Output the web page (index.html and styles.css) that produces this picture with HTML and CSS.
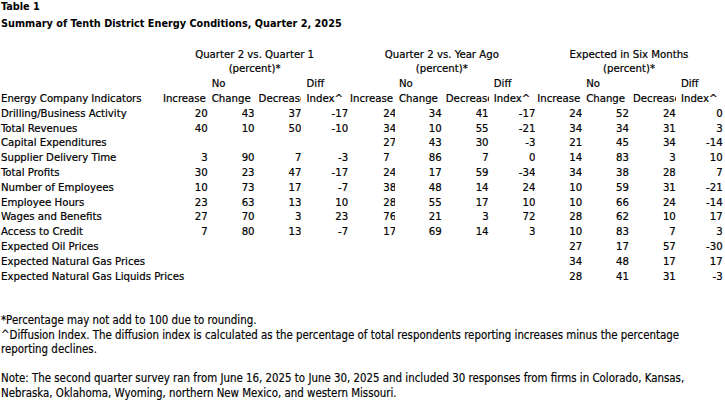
FILE: index.html
```html
<!DOCTYPE html>
<html>
<head>
<meta charset="utf-8">
<link rel="stylesheet" href="styles.css">
</head>
<body>
<div class="page">
  <div class="t1">Table 1</div>
  <div class="t2">Summary of Tenth District Energy Conditions, Quarter 2, 2025</div>
  <table class="grid">
    <colgroup>
      <col class="c-label">
      <col class="c-num"><col class="c-num"><col class="c-num"><col class="c-num">
      <col class="c-num"><col class="c-num"><col class="c-num"><col class="c-num">
      <col class="c-num"><col class="c-num"><col class="c-num"><col class="c-num">
    </colgroup>
    <thead>
      <tr>
        <th></th>
        <th colspan="4" class="grp">Quarter 2 vs. Quarter 1</th>
        <th colspan="4" class="grp">Quarter 2 vs. Year Ago</th>
        <th colspan="4" class="grp">Expected in Six Months</th>
      </tr>
      <tr>
        <th></th>
        <th colspan="4" class="grp">(percent)*</th>
        <th colspan="4" class="grp">(percent)*</th>
        <th colspan="4" class="grp">(percent)*</th>
      </tr>
      <tr>
        <th></th>
        <th rowspan="2" class="hd">Increase</th>
        <th rowspan="2" class="hd"><span class="stack">No<br>Change</span></th>
        <th rowspan="2" class="hd dec">Decrease</th>
        <th rowspan="2" class="hd"><span class="stack">Diff<br>Index^</span></th>
        <th rowspan="2" class="hd">Increase</th>
        <th rowspan="2" class="hd"><span class="stack">No<br>Change</span></th>
        <th rowspan="2" class="hd dec">Decrease</th>
        <th rowspan="2" class="hd"><span class="stack">Diff<br>Index^</span></th>
        <th rowspan="2" class="hd">Increase</th>
        <th rowspan="2" class="hd"><span class="stack">No<br>Change</span></th>
        <th rowspan="2" class="hd dec">Decrease</th>
        <th rowspan="2" class="hd"><span class="stack">Diff<br>Index^</span></th>
      </tr>
      <tr>
        <th class="lab">Energy Company Indicators</th>
      </tr>
    </thead>
    <tbody>
      <tr><td class="lab">Drilling/Business Activity</td><td>20</td><td>43</td><td>37</td><td>-17</td><td>24</td><td>34</td><td>41</td><td>-17</td><td>24</td><td>52</td><td>24</td><td>0</td></tr>
      <tr><td class="lab">Total Revenues</td><td>40</td><td>10</td><td>50</td><td>-10</td><td>34</td><td>10</td><td>55</td><td>-21</td><td>34</td><td>34</td><td>31</td><td>3</td></tr>
      <tr><td class="lab">Capital Expenditures</td><td></td><td></td><td></td><td></td><td>27</td><td>43</td><td>30</td><td>-3</td><td>21</td><td>45</td><td>34</td><td>-14</td></tr>
      <tr><td class="lab">Supplier Delivery Time</td><td>3</td><td>90</td><td>7</td><td>-3</td><td>7</td><td>86</td><td>7</td><td>0</td><td>14</td><td>83</td><td>3</td><td>10</td></tr>
      <tr><td class="lab">Total Profits</td><td>30</td><td>23</td><td>47</td><td>-17</td><td>24</td><td>17</td><td>59</td><td>-34</td><td>34</td><td>38</td><td>28</td><td>7</td></tr>
      <tr><td class="lab">Number of Employees</td><td>10</td><td>73</td><td>17</td><td>-7</td><td>38</td><td>48</td><td>14</td><td>24</td><td>10</td><td>59</td><td>31</td><td>-21</td></tr>
      <tr><td class="lab">Employee Hours</td><td>23</td><td>63</td><td>13</td><td>10</td><td>28</td><td>55</td><td>17</td><td>10</td><td>10</td><td>66</td><td>24</td><td>-14</td></tr>
      <tr><td class="lab">Wages and Benefits</td><td>27</td><td>70</td><td>3</td><td>23</td><td>76</td><td>21</td><td>3</td><td>72</td><td>28</td><td>62</td><td>10</td><td>17</td></tr>
      <tr><td class="lab">Access to Credit</td><td>7</td><td>80</td><td>13</td><td>-7</td><td>17</td><td>69</td><td>14</td><td>3</td><td>10</td><td>83</td><td>7</td><td>3</td></tr>
      <tr><td class="lab">Expected Oil Prices</td><td></td><td></td><td></td><td></td><td></td><td></td><td></td><td></td><td>27</td><td>17</td><td>57</td><td>-30</td></tr>
      <tr><td class="lab">Expected Natural Gas Prices</td><td></td><td></td><td></td><td></td><td></td><td></td><td></td><td></td><td>34</td><td>48</td><td>17</td><td>17</td></tr>
      <tr><td class="lab">Expected Natural Gas Liquids Prices</td><td></td><td></td><td></td><td></td><td></td><td></td><td></td><td></td><td>28</td><td>41</td><td>31</td><td>-3</td></tr>
    </tbody>
  </table>
  <div class="notes">
    <p class="note">*Percentage may not add to 100 due to rounding.<br>^Diffusion Index. The diffusion index is calculated as the percentage of total respondents reporting increases minus the percentage<br>reporting declines.</p>
    <p class="note gap">Note: The second quarter survey ran from June 16, 2025 to June 30, 2025 and included 30 responses from firms in Colorado, Kansas,<br>Nebraska, Oklahoma, Wyoming, northern New Mexico, and western Missouri.</p>
  </div>
</div>
</body>
</html>
```

FILE: styles.css
```css
html, body {
  margin: 0;
  padding: 0;
  background: #fff;
}

body {
  font-family: "DejaVu Sans Condensed", "DejaVu Sans", sans-serif;
  font-size: 11.3px;
  color: #000;
}

.page {
  padding-left: 1px;
}

.t1 {
  font-weight: bold;
  font-size: 10.8px;
  line-height: 14px;
}

.t2 {
  font-weight: bold;
  font-size: 10.8px;
  line-height: 14.8px;
  margin-top: 2.5px;
}

.grid {
  border-collapse: collapse;
  table-layout: fixed;
  width: 721.6px;
  margin-top: 16.3px;
  -webkit-text-stroke: 0.2px #000;
}

.c-label {
  width: 160px;
}

.c-num {
  width: 46.8px;
}

.grid th,
.grid td {
  padding: 0;
  height: 14.8px;
  line-height: 14.8px;
  white-space: nowrap;
  overflow: hidden;
  font-weight: normal;
  text-align: right;
  vertical-align: middle;
}

.grid .grp {
  text-align: center;
}

.grid .hd {
  text-align: center;
  vertical-align: bottom;
}

.grid .dec {
  text-align: left;
  padding-left: 4px;
  text-overflow: clip;
}

.stack {
  display: inline-block;
  text-align: left;
}

.grid .lab {
  text-align: left;
  overflow: visible;
}

.grid tbody td:nth-child(6) {
  text-align: left;
  padding-left: 35px;
}

.notes {
  margin-top: 29px;
  font-size: 11.4px;
  line-height: 14.5px;
  -webkit-text-stroke: 0.15px #000;
}

.note {
  margin: 0;
}

.note.gap {
  margin-top: 14.5px;
}
```
